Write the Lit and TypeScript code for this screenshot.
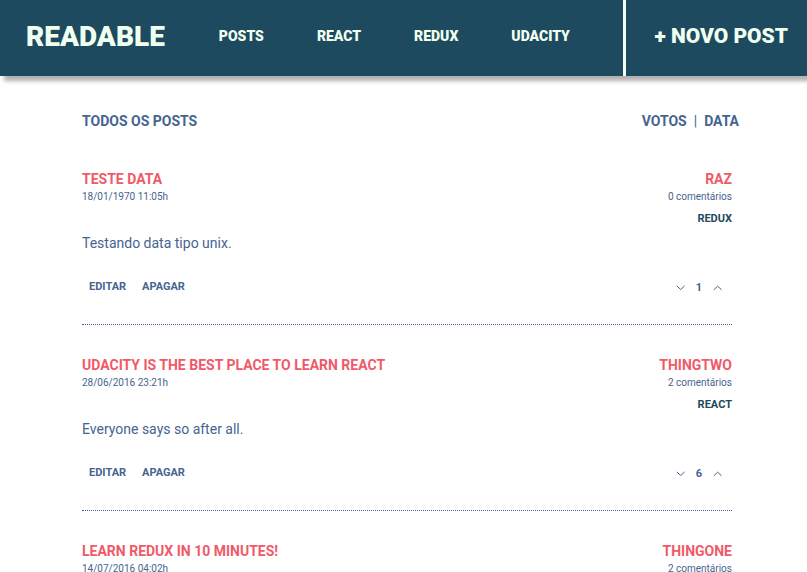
import { LitElement, html, css } from "lit";
import { customElement, property, state } from "lit/decorators.js";

interface Post {
  title: string;
  date: string;
  author: string;
  comments: number;
  category: string;
  body: string;
  votes: number;
}

const POSTS: Post[] = [
  { title: "Teste data", date: "18/01/1970 11:05h", author: "Raz", comments: 0, category: "Redux", body: "Testando data tipo unix.", votes: 1 },
  { title: "Udacity is the best place to learn React", date: "28/06/2016 23:21h", author: "thingtwo", comments: 2, category: "React", body: "Everyone says so after all.", votes: 6 },
  { title: "Learn Redux in 10 minutes!", date: "14/07/2016 04:02h", author: "thingone", comments: 2, category: "Redux", body: "Just kidding. It takes more than 10 minutes to learn technology.", votes: -5 },
];

@customElement("post-item")
export class PostItem extends LitElement {
  @property({ attribute: false }) post!: Post;
  @state() private delta = 0;

  static styles = css`
    :host { display: block; border-bottom: 1px dotted #3f5f8a; padding-bottom: 28px; margin-bottom: 31px; }
    .top { display: flex; justify-content: space-between; }
    .right { text-align: right; }
    h2, .author { margin: 0; font-size: 14px; line-height: 18px; font-weight: 700; text-transform: uppercase; color: #f05a68; }
    h2 a { color: inherit; text-decoration: none; }
    .meta { font-size: 10px; line-height: 18px; }
    .category { font-size: 11px; line-height: 18px; margin-top: 4px; font-weight: 700; text-transform: uppercase; color: #1d4a5f; }
    .body { margin: 6px 0 0; font-size: 14px; line-height: 18px; }
    .actions { display: flex; justify-content: space-between; align-items: center; margin-top: 26px; padding: 0 7px; }
    .group { display: flex; align-items: center; gap: 16px; }
    .votes { gap: 8px; padding-top: 2px; }
    button { font: inherit; font-size: 11px; line-height: 16px; font-weight: 700; color: inherit; background: none; border: 0; padding: 0; text-transform: uppercase; cursor: pointer; }
    .arrow { display: flex; padding: 3px; }
    .count { font-size: 11px; line-height: 16px; font-weight: 700; }
    svg { display: block; fill: none; stroke: currentColor; stroke-width: 1; }
  `;

  render() {
    const p = this.post;
    return html`
      <div class="top">
        <div>
          <h2><a href="#post">${p.title}</a></h2>
          <div class="meta">${p.date}</div>
        </div>
        <div class="right">
          <div class="author">${p.author}</div>
          <div class="meta">${p.comments} comentários</div>
          <div class="category">${p.category}</div>
        </div>
      </div>
      <p class="body">${p.body}</p>
      <div class="actions">
        <div class="group"><button>Editar</button><button>Apagar</button></div>
        <div class="group votes">
          <button class="arrow" aria-label="Votar contra" @click=${() => this.delta--}>
            <svg width="9" height="6" viewBox="0 0 9 6"><path d="M0.8 0.9 L4.7 4.5 L8.6 0.9" /></svg>
          </button>
          <span class="count">${p.votes + this.delta}</span>
          <button class="arrow" aria-label="Votar a favor" @click=${() => this.delta++}>
            <svg width="9" height="6" viewBox="0 0 9 6"><path d="M0.8 4.8 L4.7 1.2 L8.6 4.8" /></svg>
          </button>
        </div>
      </div>
    `;
  }
}

@customElement("app-root")
export class AppRoot extends LitElement {
  static styles = css`
    :host { display: block; height: 100vh; overflow-y: auto; scrollbar-width: none; background: #fff; color: #466490; font-family: Roboto, "Liberation Sans", sans-serif; }
    header { display: flex; align-items: stretch; height: 76px; background: #1d4a5f; box-shadow: 4px 5px 4px #b3b1b1; font-weight: 900; text-transform: uppercase; }
    a { color: #f1fff0; text-decoration: none; }
    .brand { display: flex; align-items: center; padding: 0 26px 2px; font-size: 28px; line-height: 36px; }
    nav { flex: 1; display: flex; align-items: center; gap: 53px; padding: 0 28px 4px; font-size: 14px; line-height: 20px; }
    .new { display: flex; align-items: center; border-left: 3px solid #f1fff0; padding: 0 19px 4px 28px; font-size: 21px; line-height: 28px; white-space: nowrap; }
    main { padding: 36px 75px 0 82px; }
    .bar { display: flex; justify-content: space-between; margin: 0 -7px 40px 0; font-size: 14px; line-height: 18px; font-weight: 700; text-transform: uppercase; }
    .bar h1 { margin: 0; font: inherit; }
    .sort { display: flex; gap: 7px; }
    .sort span { font-weight: 400; }
    .sort button { font: inherit; color: inherit; background: none; border: 0; padding: 0; text-transform: uppercase; cursor: pointer; }
  `;

  render() {
    return html`
      <header>
        <a class="brand" href="#home">Readable</a>
        <nav>${["Posts", "React", "Redux", "Udacity"].map((c) => html`<a href="#${c}">${c}</a>`)}</nav>
        <a class="new" href="#novo">+ Novo Post</a>
      </header>
      <main>
        <div class="bar">
          <h1>Todos os posts</h1>
          <div class="sort"><button>Votos</button><span>|</span><button>Data</button></div>
        </div>
        ${POSTS.map((p) => html`<post-item .post=${p}></post-item>`)}
      </main>
    `;
  }
}
